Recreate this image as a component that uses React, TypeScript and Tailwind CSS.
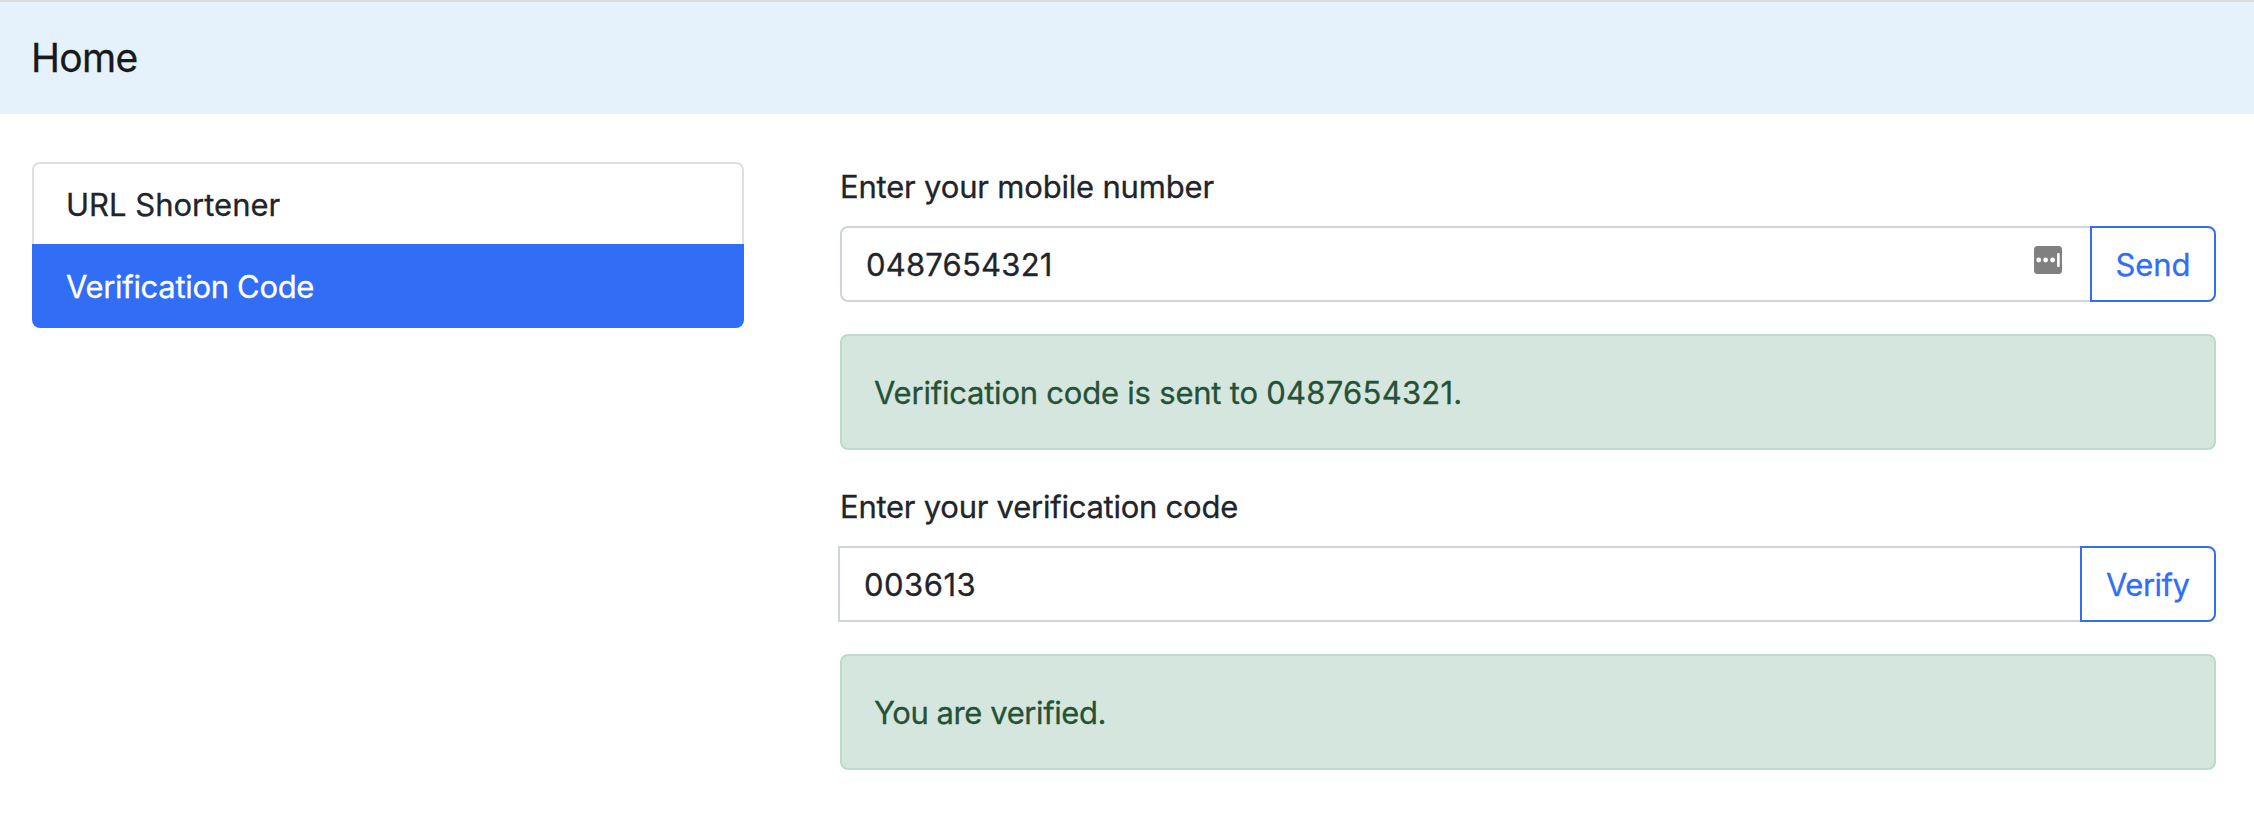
import type { ReactNode } from "react";

function PasswordManagerIcon() {
  return (
    <svg
      viewBox="0 0 28 28"
      className="pointer-events-none absolute top-5 right-7 size-7"
      aria-hidden="true"
    >
      <rect width="28" height="28" rx="3.5" fill="#808080" />
      <circle cx="4.7" cy="14" r="2.4" fill="#fff" />
      <circle cx="11.6" cy="14" r="2.4" fill="#fff" />
      <circle cx="18.6" cy="14" r="2.4" fill="#fff" />
      <rect x="23.1" y="7" width="2.6" height="14" rx="1" fill="#fff" />
    </svg>
  );
}

function Alert({ children }: { children: ReactNode }) {
  return (
    <div
      role="alert"
      className="mt-8 rounded-lg border-2 border-[#bfdacd] bg-[#d5e6de] pt-8 pr-8 pb-[30px] pl-8 text-[#255137]"
    >
      {children}
    </div>
  );
}

export default function App() {
  return (
    <div className="min-h-[824px] w-full bg-white font-[Inter,sans-serif] text-[31px] leading-[50px] text-[#212529] [-webkit-text-stroke:0.3px]">
      <header className="flex h-[114px] items-center border-t-2 border-[#dcdddd] bg-[#e5f2fc] pl-[31px]">
        <a className="text-[39px] leading-[60px] tracking-[-0.65px] text-[#171a1b]">Home</a>
      </header>

      <main className="flex pt-12 pr-[38px] pl-8">
        <nav className="mr-24 flex w-[712px] shrink-0 flex-col self-start">
          <a className="rounded-t-lg border-2 border-b-0 border-[#dfdfdf] pt-4 pb-3.5 pl-8">
            URL Shortener
          </a>
          <a className="rounded-b-lg bg-[#326df5] pt-[18px] pb-4 pl-[34px] tracking-[-0.32px] text-white">
            Verification Code
          </a>
        </nav>

        <section className="min-w-0 flex-1">
          <label htmlFor="mobile" className="block tracking-[-0.19px]">
            Enter your mobile number
          </label>
          <div className="mt-3.5 flex">
            <div className="relative min-w-0 flex-1">
              <input
                id="mobile"
                defaultValue="0487654321"
                className="block h-[76px] w-full rounded-l-lg border-2 border-r-0 border-[#ced4da] bg-white py-[11px] pl-6 tracking-[0.2px] outline-none"
              />
              <PasswordManagerIcon />
            </div>
            <button className="h-[76px] w-[126px] rounded-r-lg border-2 border-[#326df5] pt-3 pb-2.5 pl-[23.5px] text-left tracking-[-0.1px] text-[#326df5]">
              Send
            </button>
          </div>
          <Alert>
            <span className="tracking-[-0.22px]">Verification code is sent to </span>
            <span className="tracking-[0.25px]">0487654321.</span>
          </Alert>

          <label htmlFor="code" className="mt-8 block tracking-[-0.25px]">
            Enter your verification code
          </label>
          <div className="mt-3.5 -ml-0.5 flex">
            <input
              id="code"
              defaultValue="003613"
              className="block h-[76px] min-w-0 flex-1 border-2 border-r-0 border-[#ced4da] bg-white py-[11px] pl-6 tracking-[0.5px] outline-none"
            />
            <button className="h-[76px] w-[136px] rounded-r-lg border-2 border-[#326df5] pt-3 pb-2.5 pl-6 text-left tracking-[-0.5px] text-[#326df5]">
              Verify
            </button>
          </div>
          <Alert>
            <span className="tracking-[-0.42px]">You are verified.</span>
          </Alert>
        </section>
      </main>
    </div>
  );
}
